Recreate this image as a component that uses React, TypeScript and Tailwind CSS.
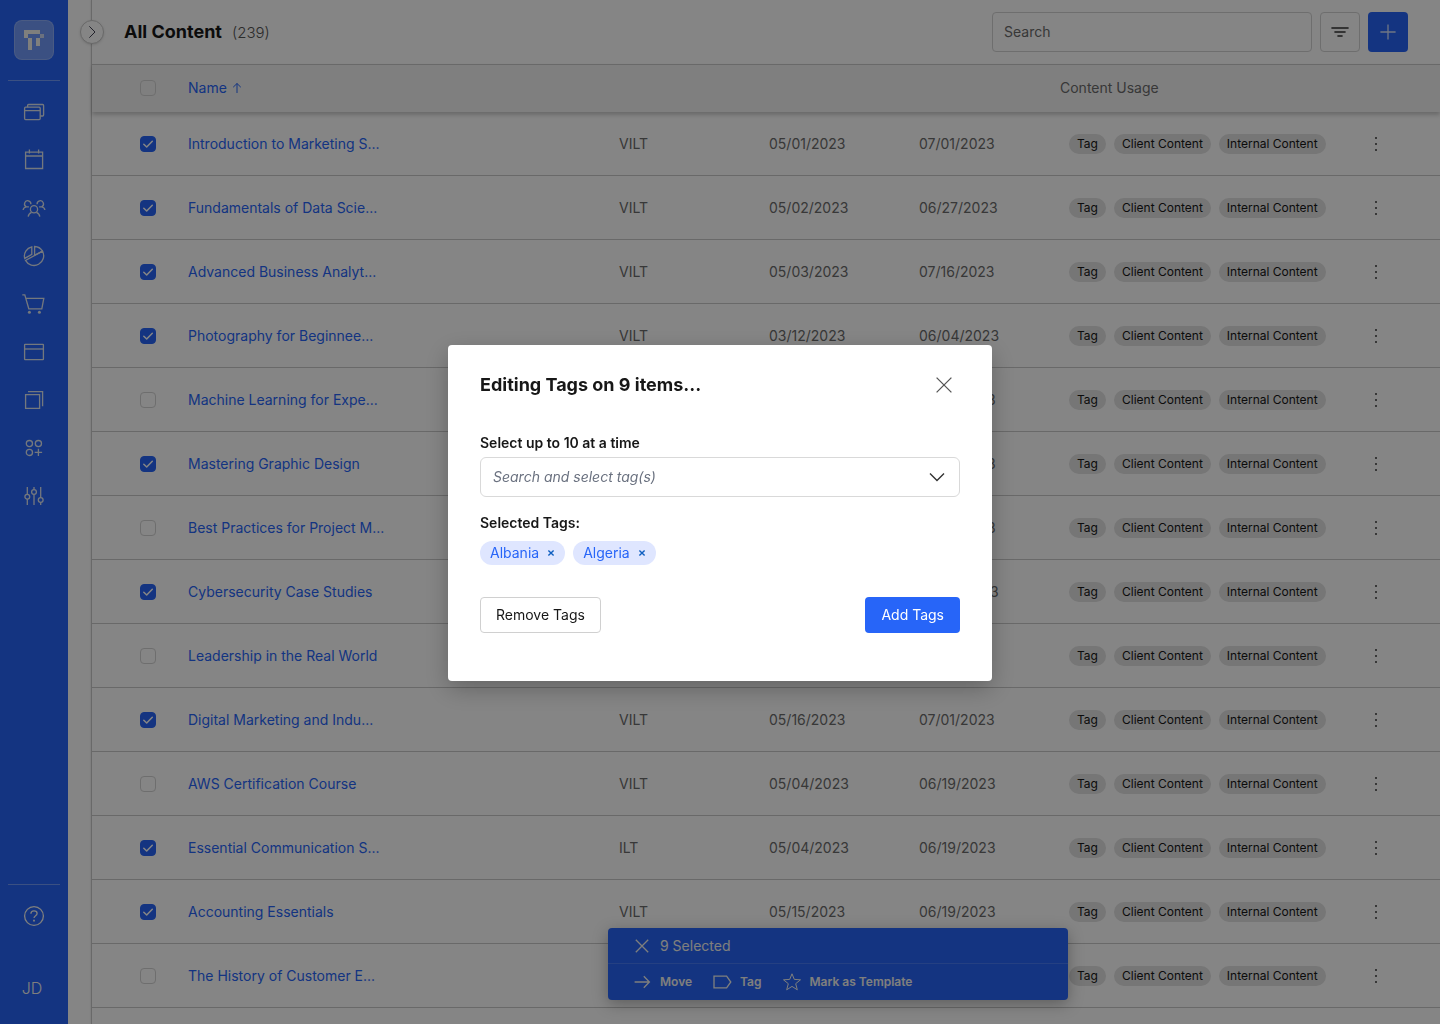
import type { ReactNode } from "react";

interface ContentRow {
  name: string;
  type: string;
  created: string;
  updated: string;
  checked: boolean;
}

const rows: ContentRow[] = [
  { name: "Introduction to Marketing S...", type: "VILT", created: "05/01/2023", updated: "07/01/2023", checked: true },
  { name: "Fundamentals of Data Scie...", type: "VILT", created: "05/02/2023", updated: "06/27/2023", checked: true },
  { name: "Advanced Business Analyt...", type: "VILT", created: "05/03/2023", updated: "07/16/2023", checked: true },
  { name: "Photography for Beginnee...", type: "VILT", created: "03/12/2023", updated: "06/04/2023", checked: true },
  { name: "Machine Learning for Expe...", type: "VILT", created: "05/04/2023", updated: "06/19/2023", checked: false },
  { name: "Mastering Graphic Design", type: "VILT", created: "05/04/2023", updated: "06/19/2023", checked: true },
  { name: "Best Practices for Project M...", type: "VILT", created: "05/04/2023", updated: "06/19/2023", checked: false },
  { name: "Cybersecurity Case Studies", type: "VILT", created: "05/04/2023", updated: "06/20/2023", checked: true },
  { name: "Leadership in the Real World", type: "VILT", created: "05/15/2023", updated: "07/11/2023", checked: false },
  { name: "Digital Marketing and Indu...", type: "VILT", created: "05/16/2023", updated: "07/01/2023", checked: true },
  { name: "AWS Certification Course", type: "VILT", created: "05/04/2023", updated: "06/19/2023", checked: false },
  { name: "Essential Communication S...", type: "ILT", created: "05/04/2023", updated: "06/19/2023", checked: true },
  { name: "Accounting Essentials", type: "VILT", created: "05/15/2023", updated: "06/19/2023", checked: true },
  { name: "The History of Customer E...", type: "VILT", created: "05/15/2023", updated: "06/19/2023", checked: false },
];

const usageTags = ["Tag", "Client Content", "Internal Content"];

function Icon({ children, className = "size-6" }: { children: ReactNode; className?: string }) {
  return (
    <svg
      viewBox="0 0 24 24"
      fill="none"
      stroke="currentColor"
      strokeWidth="1.3"
      aria-hidden="true"
      className={`shrink-0 ${className}`}
    >
      {children}
    </svg>
  );
}

const navItems = [
  {
    label: "Library",
    icon: (
      <>
        <rect x="2.6" y="7.2" width="15.6" height="12.4" rx="1" />
        <path d="M2.6 10.6h15.6M5.6 7.2V5.5a1 1 0 0 1 1-1h14a1 1 0 0 1 1 1V15a1 1 0 0 1-1 1h-2.4" />
      </>
    ),
  },
  {
    label: "Calendar",
    icon: <path d="M3.6 4.2h17v16.3h-17zM3.6 8h17M7.4 1.6v4M16.6 1.6v4" />,
  },
  {
    label: "People",
    icon: (
      <>
        <circle cx="12" cy="13.2" r="3.6" />
        <path d="M6.2 20.6c.2-1.9 1.4-3.4 3.4-4.2M17.8 20.6c-.2-1.9-1.4-3.4-3.4-4.2" />
        <path d="M8.9 8.2a3.2 3.2 0 1 0-4.6 2.6c-1.8.3-2.9 1.5-3.2 3.2M4.3 10.9h2.6M15.1 8.2a3.2 3.2 0 1 1 4.6 2.6c1.8.3 2.9 1.5 3.2 3.2M19.7 10.9h-2.6" />
      </>
    ),
  },
  {
    label: "Reports",
    icon: (
      <>
        <path d="M12.6 2.5a9.5 9.5 0 0 1 7.9 4.7l-7.9 4.1z" />
        <path d="M9.8 2.8v7.6L2.7 14.4A9.5 9.5 0 0 1 9.8 2.8z" />
        <path d="M20.5 7.2A9.5 9.5 0 1 1 3.5 16.4z" />
      </>
    ),
  },
  {
    label: "Store",
    icon: (
      <>
        <path d="M.3 2.9h2.5l4 13.9h13l2-10.4h-18" />
        <circle cx="7.4" cy="20.3" r="1.5" fill="currentColor" stroke="none" />
        <circle cx="17.4" cy="20.3" r="1.5" fill="currentColor" stroke="none" />
      </>
    ),
  },
  {
    label: "Pages",
    icon: (
      <>
        <rect x="2.6" y="4.3" width="18.8" height="15.4" rx=".5" />
        <path d="M2.6 9h18.8" />
      </>
    ),
  },
  {
    label: "Templates",
    icon: <path d="M3.6 6.6h14v13.8h-14zM6 3.6h14.6v14.6" />,
  },
  {
    label: "Apps",
    icon: (
      <>
        <circle cx="7.4" cy="7.6" r="3.1" />
        <circle cx="16.4" cy="7.6" r="3.1" />
        <circle cx="7.4" cy="16.4" r="3.1" />
        <path d="M16.4 12.7v7.4M12.7 16.4h7.4" />
      </>
    ),
  },
  {
    label: "Settings",
    icon: (
      <>
        <path d="M5.3 3v7.4M5.3 15v6M12 3v2.6M12 10.4V21M18.7 3v10.6M18.7 18.4V21" />
        <circle cx="5.3" cy="12.7" r="2.4" />
        <circle cx="12" cy="8" r="2.4" />
        <circle cx="18.7" cy="16" r="2.4" />
      </>
    ),
  },
];

function Sidebar() {
  return (
    <nav className="flex w-[68px] shrink-0 flex-col items-center bg-[#2765f8] text-[#f4f4f0]">
      <a
        href="#"
        aria-label="Home"
        className="mt-5 flex size-10 items-center justify-center rounded-lg border border-white/20 bg-white/35"
      >
        <svg viewBox="0 0 20 20" fill="currentColor" aria-hidden="true" className="size-5">
          <path d="M0 0h16v4H4v4H0zM4 8h4v12H4zM12 8h4v8h-4z" />
          <path d="M16 4h4v4h-4z" fillOpacity=".7" />
        </svg>
      </a>
      <div className="mt-5 h-px w-[52px] bg-white/35" />
      <div className="mt-[19px] flex flex-col gap-6">
        {navItems.map((item) => (
          <a key={item.label} href="#" aria-label={item.label} className="opacity-90">
            <Icon>{item.icon}</Icon>
          </a>
        ))}
      </div>
      <div className="mt-auto h-px w-[52px] bg-white/35" />
      <a href="#" aria-label="Help" className="mt-[19px]">
        <Icon>
          <circle cx="12" cy="12" r="9.4" />
          <path d="M8.9 9.8c0-1.8 1.3-2.9 3.1-2.9s3.1 1 3.1 2.6c0 2.2-3.1 2.2-3.1 4.5" />
          <path d="M12 15.8v1.8" strokeWidth="1.8" />
        </Icon>
      </a>
      <button className="mt-12 mb-6 pr-1 text-base leading-6 font-light">JD</button>
    </nav>
  );
}

function Checkbox({ label, checked = false }: { label: string; checked?: boolean }) {
  return (
    <span className="grid size-4">
      <input
        type="checkbox"
        aria-label={label}
        defaultChecked={checked}
        className="peer col-start-1 row-start-1 size-4 appearance-none rounded border border-[#d4d4d4] checked:border-[#2765f8] checked:bg-[#2765f8]"
      />
      <svg
        viewBox="0 0 16 16"
        fill="none"
        stroke="white"
        strokeWidth="1.5"
        strokeLinecap="round"
        strokeLinejoin="round"
        aria-hidden="true"
        className="pointer-events-none col-start-1 row-start-1 hidden size-4 peer-checked:block"
      >
        <path d="M3.8 8.2l2.9 2.8 5.6-5.8" />
      </svg>
    </span>
  );
}

function PageHeader() {
  return (
    <header className="flex h-16 shrink-0 items-center justify-between px-8">
      <div className="flex items-baseline gap-2.5">
        <h1 className="text-lg font-bold text-[#171717]">All Content</h1>
        <span className="text-[15px] font-light text-[#555]">(239)</span>
      </div>
      <div className="flex gap-2">
        <input
          type="text"
          aria-label="Search"
          placeholder="Search"
          className="h-10 w-80 rounded border border-[#d4d4d4] px-[11px] pb-0.5 text-sm placeholder:text-[#6b6b6b]"
        />
        <button
          aria-label="Filter"
          className="flex size-10 items-center justify-center rounded border border-[#d4d4d4] text-[#333]"
        >
          <Icon>
            <path d="M3.4 8h17.2M6.4 12h11.2M9.4 16h5.2" strokeWidth="1.5" />
          </Icon>
        </button>
        <button aria-label="Add content" className="flex size-10 items-center justify-center rounded bg-[#2765f8] text-white/80">
          <Icon>
            <path d="M12 4.4v15.2M4.4 12h15.2" />
          </Icon>
        </button>
      </div>
    </header>
  );
}

function ContentTable() {
  return (
    <table className="w-full table-fixed border-separate border-spacing-0 text-left text-sm text-[#6b6b6b]">
      <colgroup>
        <col className="w-24" />
        <col />
        <col className="w-[150px]" />
        <col className="w-[150px]" />
        <col className="w-[150px]" />
        <col className="w-[284px]" />
        <col className="w-24" />
      </colgroup>
      <thead>
        <tr className="h-12 bg-[#f4f4f4] shadow-[0_3px_4px_rgba(0,0,0,0.2)]">
          <th className="border-t border-[#c9c9c9] pb-0.5 pl-12">
            <Checkbox label="Select all" />
          </th>
          <th className="border-t border-[#c9c9c9] pb-0.5 font-normal text-[#2765f8]">
            <button className="flex items-center gap-1">
              Name
              <svg viewBox="0 0 12 12" fill="none" stroke="currentColor" aria-hidden="true" className="size-3">
                <path d="M6 11V1.5M2.2 5.2L6 1.5l3.8 3.7" />
              </svg>
            </button>
          </th>
          <th className="border-t border-[#c9c9c9]" />
          <th className="border-t border-[#c9c9c9]" />
          <th className="border-t border-[#c9c9c9]" />
          <th className="border-t border-[#c9c9c9] pb-0.5 font-normal">Content Usage</th>
          <th className="border-t border-[#c9c9c9]" />
        </tr>
      </thead>
      <tbody>
        {rows.map((row) => (
          <tr key={row.name} className="h-16">
            <td className="border-b border-[#c9c9c9] pl-12">
              <Checkbox label={row.name} checked={row.checked} />
            </td>
            <td className="border-b border-[#c9c9c9] text-[#2765f8]">
              <a href="#">{row.name}</a>
            </td>
            <td className="border-b border-[#c9c9c9] pl-[9px]">{row.type}</td>
            <td className="border-b border-[#c9c9c9] pl-[9px]">{row.created}</td>
            <td className="border-b border-[#c9c9c9] pl-[9px]">{row.updated}</td>
            <td className="border-b border-[#c9c9c9] pl-[9px]">
              <div className="flex gap-2">
                {usageTags.map((tag) => (
                  <span
                    key={tag}
                    className="rounded-full bg-[#e2e2e2] px-2 text-xs leading-5 whitespace-nowrap text-[#171717]"
                  >
                    {tag}
                  </span>
                ))}
              </div>
            </td>
            <td className="border-b border-[#c9c9c9] pl-6">
              <button aria-label="More actions" className="block">
                <svg viewBox="0 0 16 16" fill="currentColor" aria-hidden="true" className="size-4">
                  <path d="M7 1h2v2H7zM7 7h2v2H7zM7 13h2v2H7z" />
                </svg>
              </button>
            </td>
          </tr>
        ))}
      </tbody>
    </table>
  );
}

function SelectionBar() {
  return (
    <div className="absolute bottom-6 left-[608px] w-[460px] rounded bg-[#2765f8] text-[#f4f4f0] shadow-[0_4px_16px_rgba(0,0,0,0.3)]">
      <div className="flex h-9 items-center gap-1.5 border-b border-white/15 pl-[22px]">
        <button aria-label="Clear selection">
          <Icon>
            <path d="M5.8 5.8l12.4 12.4M18.2 5.8L5.8 18.2" />
          </Icon>
        </button>
        <span className="text-sm">9 Selected</span>
      </div>
      <div className="flex h-9 items-center gap-[18px] pl-[22px] text-xs font-semibold">
        <button className="flex items-center gap-1.5">
          <Icon>
            <path d="M4.6 12h14.6M13.8 6.2l5.6 5.8-5.6 5.8" />
          </Icon>
          Move
        </button>
        <button className="flex items-center gap-1.5">
          <Icon>
            <path d="M4 6.2h12.6l4.2 5.8-4.2 5.8H4z" />
          </Icon>
          Tag
        </button>
        <button className="flex items-center gap-1.5">
          <Icon>
            <path d="M12 3.8l2.3 5.6 6.2.4-4.8 3.9 1.6 6.1-5.3-3.4-5.3 3.4 1.6-6.1-4.8-3.9 6.2-.4z" strokeWidth="1" />
          </Icon>
          Mark as Template
        </button>
      </div>
    </div>
  );
}

function SelectedTag({ name }: { name: string }) {
  return (
    <span className="flex h-6 items-center gap-2 rounded-full bg-[#dfe6ff] px-2.5 text-sm text-[#2765f8]">
      {name}
      <button aria-label={`Remove ${name}`}>
        <svg viewBox="0 0 8 8" fill="none" stroke="#0f5fc0" strokeWidth="1.4" aria-hidden="true" className="size-2">
          <path d="M1.4 1.4l5.2 5.2M6.6 1.4L1.4 6.6" />
        </svg>
      </button>
    </span>
  );
}

function EditTagsModal() {
  return (
    <div className="fixed inset-0 z-10 flex items-center justify-center bg-black/48 pt-0.5">
      <div
        role="dialog"
        aria-labelledby="modal-title"
        className="w-[544px] rounded bg-white px-8 pt-6 pb-12 text-sm text-[#171717] shadow-[0_8px_24px_rgba(0,0,0,0.25)]"
      >
        <div className="flex h-8 items-center justify-between">
          <h2 id="modal-title" className="text-lg font-bold">
            Editing Tags on 9 items...
          </h2>
          <button aria-label="Close" className="flex size-8 items-center justify-center text-[#555]">
            <Icon>
              <path d="M4.6 4.6l14.8 14.8M19.4 4.6L4.6 19.4" />
            </Icon>
          </button>
        </div>
        <label htmlFor="tag-search" className="mt-8 block font-semibold">
          Select up to 10 at a time
        </label>
        <div className="mt-1 flex h-10 items-center rounded-md border border-[#d9d9d9] pr-2.5 pl-3">
          <input
            id="tag-search"
            type="text"
            placeholder="Search and select tag(s)"
            className="min-w-0 flex-1 outline-none placeholder:text-[#6b7280] placeholder:italic"
          />
          <button aria-label="Show tags" className="text-[#333]">
            <Icon>
              <path d="M5 8.4l7 7 7-7" strokeWidth="1.4" />
            </Icon>
          </button>
        </div>
        <p className="mt-4 font-semibold">Selected Tags:</p>
        <div className="mt-2 flex gap-2">
          <SelectedTag name="Albania" />
          <SelectedTag name="Algeria" />
        </div>
        <div className="mt-8 flex justify-between">
          <button className="h-9 rounded border border-[#d0d0d0] px-[15px]">Remove Tags</button>
          <button className="h-9 rounded bg-[#2765f8] px-4 text-white">Add Tags</button>
        </div>
      </div>
    </div>
  );
}

export default function App() {
  return (
    <div className="relative flex h-screen overflow-hidden bg-white font-['Inter',sans-serif]">
      <Sidebar />
      <div className="w-[23px] shrink-0" />
      <main className="relative min-w-0 flex-1 border-l border-[#c9c9c9] shadow-[0_0_2px_rgba(0,0,0,0.15)]">
        <button
          aria-label="Expand panel"
          className="absolute top-5 -left-3 flex size-6 items-center justify-center rounded-full border border-[#c9c9c9] bg-white text-[#445] shadow-sm"
        >
          <Icon className="size-4">
            <path d="M8 3.5l8.5 8.5L8 20.5" strokeWidth="1.5" />
          </Icon>
        </button>
        <PageHeader />
        <ContentTable />
      </main>
      <SelectionBar />
      <EditTagsModal />
    </div>
  );
}
